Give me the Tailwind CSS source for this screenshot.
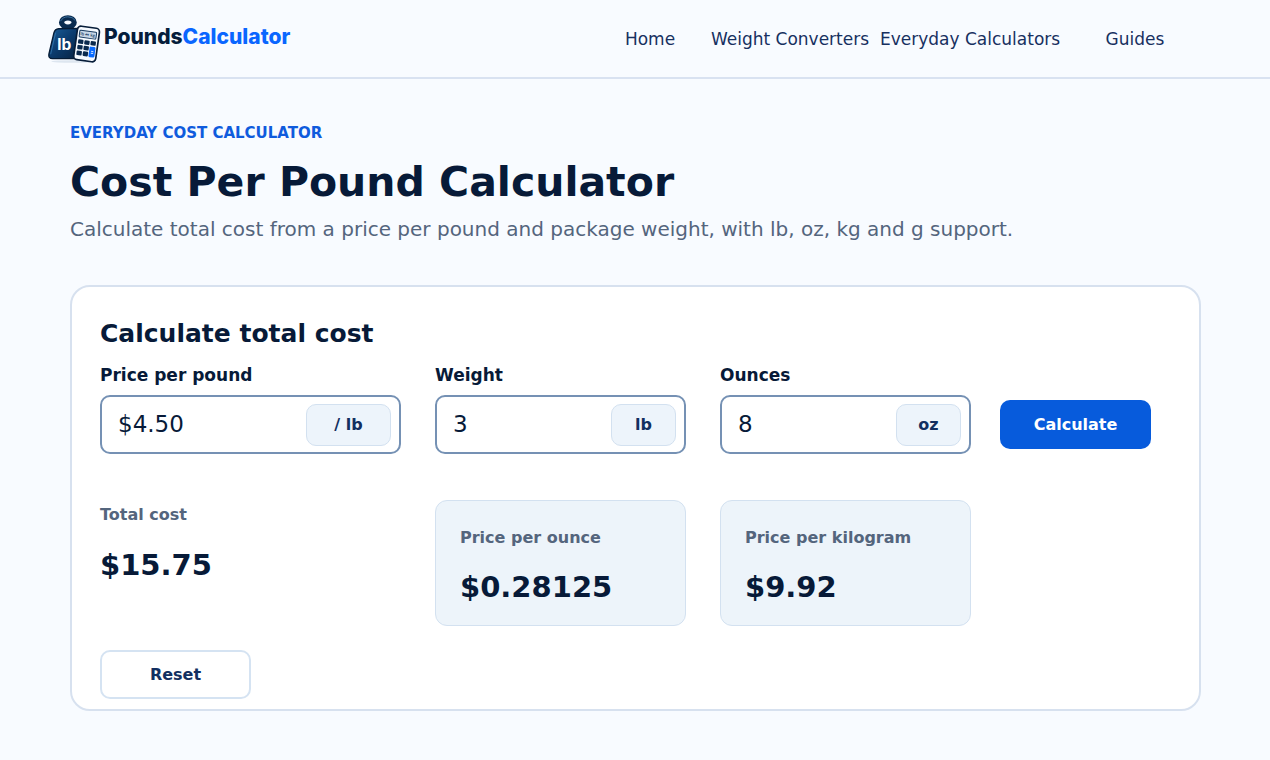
<!DOCTYPE html>
<html lang="en">
  <head>
    <meta charset="UTF-8" />
    <meta name="viewport" content="width=device-width, initial-scale=1.0" />
    <title>Cost Per Pound Calculator</title>
    <script src="https://cdn.jsdelivr.net/npm/@tailwindcss/browser@4"></script>
  </head>
  <body class="min-h-screen bg-[#f8fbff] font-['DejaVu_Sans',sans-serif] text-[#071a38]">
    <header class="flex h-[79px] items-center justify-between border-b-2 border-[#d9e2f1] pl-12 pr-[60px]">
      <a href="#" class="flex items-center gap-[3px]" aria-label="PoundsCalculator">
        <svg class="h-[50px] w-[53px]" viewBox="24 24 160 150" fill="none">
          <defs>
            <linearGradient id="bell" x1="0" y1="0" x2="1" y2="1">
              <stop offset="0" stop-color="#1b609c" />
              <stop offset=".45" stop-color="#0c3d70" />
              <stop offset="1" stop-color="#06203f" />
            </linearGradient>
          </defs>
          <ellipse cx="100" cy="167" rx="66" ry="4" fill="#dde6f0" />
          <ellipse cx="84" cy="49" rx="19" ry="14" stroke="#0a2c50" stroke-width="16" />
          <path d="M62 45q7-13 22-13t22 11" stroke="#3a719f" stroke-width="3" />
          <path d="M70 62h28l6 10H64z" fill="#0a2c50" />
          <path d="M56 68Q45 69 42 80L27 143Q24 158 38 158H106L120 67Z" fill="url(#bell)" stroke="#051b35" stroke-width="4" stroke-linejoin="round" />
          <path d="M47 80L32 145" stroke="#3d83bb" stroke-width="2" />
          <text x="52" y="131" fill="#fff" font-family="Inter, sans-serif" font-weight="700" font-size="47">lb</text>
          <g transform="rotate(8 140 114)">
            <rect x="107" y="63" width="67" height="102" rx="11" fill="#f6faff" stroke="#071d39" stroke-width="5" />
            <rect x="115" y="75" width="51" height="21" rx="3" fill="#c9d8e8" stroke="#183b60" stroke-width="3" />
            <text x="140" y="90" text-anchor="middle" fill="#17395e" font-family="Lato, sans-serif" font-weight="700" font-size="13">lb ↔ kg</text>
            <g fill="#0a294d">
              <rect x="114" y="103" width="16" height="13" rx="3" />
              <rect x="133" y="103" width="16" height="13" rx="3" />
              <rect x="152" y="103" width="16" height="13" rx="3" />
              <rect x="114" y="120" width="16" height="13" rx="3" />
              <rect x="133" y="120" width="16" height="13" rx="3" />
              <rect x="114" y="137" width="16" height="14" rx="3" />
              <rect x="133" y="137" width="16" height="14" rx="3" />
            </g>
            <rect x="151" y="120" width="18" height="32" rx="4" fill="#086aff" />
            <path d="M157 134h7M157 140h7" stroke="#cfe4ff" stroke-width="3" />
          </g>
        </svg>
        <span class="pb-1 font-[Inter,sans-serif] text-[21px] font-extrabold leading-7 text-[#061d3c]">Pounds<span class="text-[#0a66ff]">Calculator</span></span>
      </a>
      <nav class="flex pt-[2px] text-center text-[17px] text-[#17305f]">
        <a href="#" class="w-[100px] whitespace-nowrap">Home</a>
        <a href="#" class="w-[180px] whitespace-nowrap">Weight Converters</a>
        <a href="#" class="w-[180px] whitespace-nowrap">Everyday Calculators</a>
        <a href="#" class="w-[150px] whitespace-nowrap">Guides</a>
      </nav>
    </header>

    <main class="pr-[69px] pl-[70px] pt-11 pb-12">
      <p class="text-[15px] font-bold leading-5 text-[#0f5bdd]">EVERYDAY COST CALCULATOR</p>
      <h1 class="mt-[13px] text-[41px] font-bold leading-[52px]">Cost Per Pound Calculator</h1>
      <p class="mt-[7px] text-[20px] leading-7 text-[#54657d]">Calculate total cost from a price per pound and package weight, with lb, oz, kg and g support.</p>

      <form class="mt-[42px] rounded-[20px] border-2 border-[#d7e1ef] bg-white pr-[29px] pl-7 pt-[29px] pb-[10px]" onsubmit="calculate(event)" onreset="setTimeout(calculate)">
        <h2 class="text-[25px] font-bold leading-9">Calculate total cost</h2>

        <div class="mt-[11px] grid grid-cols-[335fr_285fr_280fr_170fr] items-end">
          <div class="min-w-0 pr-[34px]">
            <label for="price" class="block text-[17px] font-bold leading-6">Price per pound</label>
            <div class="mt-2 flex h-[59px] items-center rounded-[10px] border-2 border-[#7591b4] pr-2 pl-4">
              <input id="price" type="text" value="$4.50" class="w-full min-w-0 flex-1 text-[23px] outline-none" />
              <span class="flex h-[42px] w-[85px] items-center justify-center rounded-[10px] border border-[#d3e1f0] bg-[#edf4fb] font-bold text-[#122f60]">/ lb</span>
            </div>
          </div>
          <div class="min-w-0 pr-[34px]">
            <label for="weight" class="block text-[17px] font-bold leading-6">Weight</label>
            <div class="mt-2 flex h-[59px] items-center rounded-[10px] border-2 border-[#7591b4] pr-2 pl-4">
              <input id="weight" type="text" value="3" class="w-full min-w-0 flex-1 text-[23px] outline-none" />
              <span class="flex h-[42px] w-[65px] items-center justify-center rounded-[10px] border border-[#d3e1f0] bg-[#edf4fb] font-bold text-[#122f60]">lb</span>
            </div>
          </div>
          <div class="min-w-0 pr-[29px]">
            <label for="ounces" class="block text-[17px] font-bold leading-6">Ounces</label>
            <div class="mt-2 flex h-[59px] items-center rounded-[10px] border-2 border-[#7591b4] pr-2 pl-4">
              <input id="ounces" type="text" value="8" class="w-full min-w-0 flex-1 text-[23px] outline-none" />
              <span class="flex h-[42px] w-[65px] items-center justify-center rounded-[10px] border border-[#d3e1f0] bg-[#edf4fb] font-bold text-[#122f60]">oz</span>
            </div>
          </div>
          <div class="min-w-0 pr-[19px] pb-[5px]">
            <button type="submit" class="h-[49px] w-full rounded-[10px] bg-[#075bdc] font-bold text-white">Calculate</button>
          </div>
        </div>

        <div class="mt-[46px] grid grid-cols-[335fr_285fr_280fr_170fr]">
          <div class="min-w-0 pt-[3px]">
            <p class="font-bold leading-6 text-[#54657d]">Total cost</p>
            <output id="total" class="mt-5 block text-[29px] font-bold leading-9">$15.75</output>
          </div>
          <div class="min-w-0 pr-[34px]">
            <div class="h-[126px] rounded-xl border border-[#d3e1f0] bg-[#edf4fa] px-6 pt-[25px]">
              <p class="font-bold leading-6 text-[#54657d]">Price per ounce</p>
              <output id="perOunce" class="mt-[19px] block text-[29px] font-bold leading-9">$0.28125</output>
            </div>
          </div>
          <div class="min-w-0 pr-[29px]">
            <div class="h-[126px] rounded-xl border border-[#d3e1f0] bg-[#edf4fa] px-6 pt-[25px]">
              <p class="font-bold leading-6 text-[#54657d]">Price per kilogram</p>
              <output id="perKilogram" class="mt-[19px] block text-[29px] font-bold leading-9">$9.92</output>
            </div>
          </div>
        </div>

        <button type="reset" class="mt-6 block h-[49px] w-[151px] rounded-[10px] border-2 border-[#d5e3f2] bg-white font-bold text-[#122f60]">Reset</button>
      </form>
    </main>

    <script>
      const calculate = (event) => {
        if (event) event.preventDefault();
        const read = (id) =>
          parseFloat(document.getElementById(id).value.replace("$", "")) || 0;
        const price = read("price");
        const pounds = read("weight") + read("ounces") / 16;
        document.getElementById("total").value = "$" + (price * pounds).toFixed(2);
        document.getElementById("perOunce").value = "$" + (price / 16).toFixed(5);
        document.getElementById("perKilogram").value =
          "$" + (price / 0.45359237).toFixed(2);
      };
    </script>
  </body>
</html>
